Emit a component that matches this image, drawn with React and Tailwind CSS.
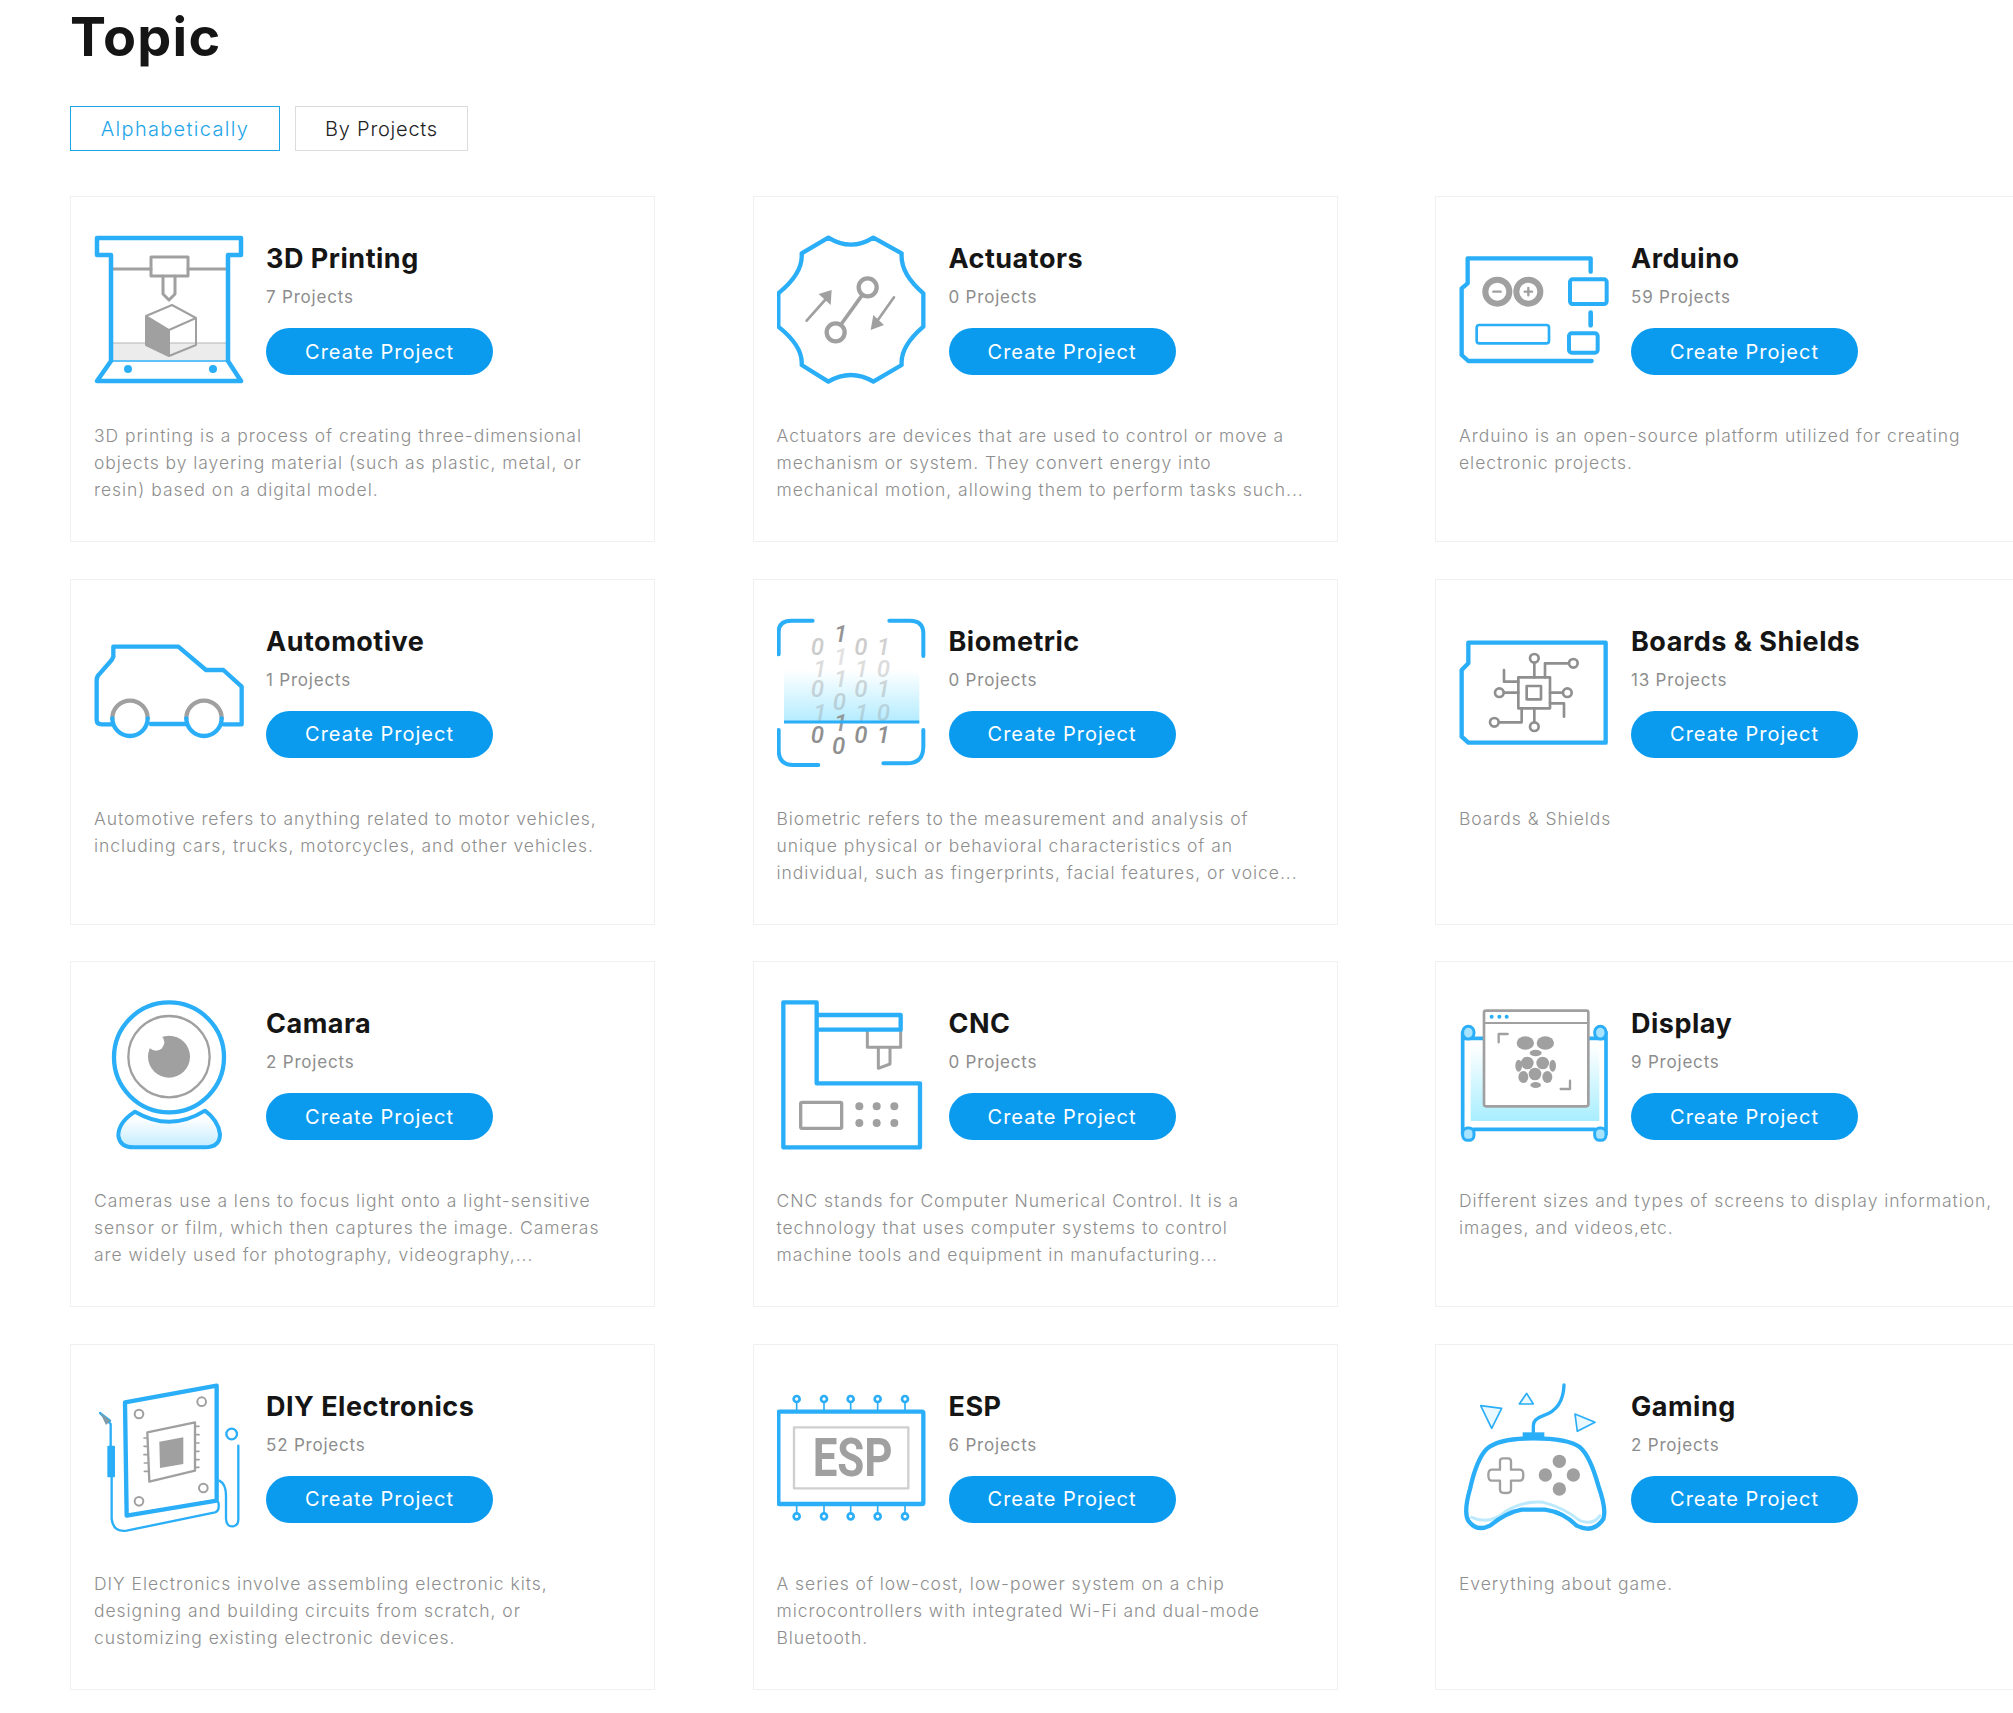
const BLUE = "#2aaef7";
const GRAY = "#a0a0a0";

const Svg = ({ vb, children }) => (
  <svg viewBox={vb} className="h-[150px] w-[150px] shrink-0" fill="none" strokeLinecap="round" strokeLinejoin="round">
    {children}
  </svg>
);

const PrintingIcon = () => (
  <Svg vb="0 0 150 150">
    <rect x="18" y="108" width="116" height="17" fill="#ececec" />
    <path d="M18 108H134" stroke="#b5b5b5" strokeWidth="1" />
    <path d="M18 34H57M94 34H134" stroke={GRAY} strokeWidth="3" />
    <rect x="57" y="22" width="37" height="19" stroke={GRAY} strokeWidth="3" />
    <path d="M69 41V59L75 65L81 59V41" stroke={GRAY} strokeWidth="3" />
    <path d="M52 81L75 95V121L52 110Z" fill={GRAY} />
    <path d="M78 70L102 83V110L75 121L52 110V81ZM52 81L75 95L102 83M75 95V121" stroke={GRAY} strokeWidth="2" fill="none" />
    <path d="M18 126H134" stroke={BLUE} strokeWidth="1.5" />
    <path d="M3 3H147V20H134V126L147 146H3L17 126V20H3Z" stroke={BLUE} strokeWidth="4.5" />
    <circle cx="34" cy="134" r="4" fill={BLUE} />
    <circle cx="119" cy="134" r="4" fill={BLUE} />
  </Svg>
);

const ActuatorsIcon = () => (
  <Svg vb="111 135 450 450">
    <path d="M265 143Q333 185 400 143L485 190Q480 250 550 310L550 410Q480 470 485 525L400 575Q333 535 265 575L185 525Q190 470 115 410L115 310Q190 250 185 190Z" stroke={BLUE} strokeWidth="13" />
    <circle cx="383" cy="292" r="27" stroke={GRAY} strokeWidth="13" />
    <circle cx="287" cy="427" r="27" stroke={GRAY} strokeWidth="13" />
    <path d="M366 316L304 402" stroke={GRAY} strokeWidth="11" />
    <path d="M200 392L255 330M462 322L410 395" stroke={GRAY} strokeWidth="8" />
    <path d="M275 300L236 312L272 345ZM392 420L432 405L400 375Z" fill={GRAY} />
  </Svg>
);

const ArduinoIcon = () => (
  <Svg vb="117 135 450 450">
    <path d="M512 245V205H143V280L125 295V495L145 513H515" stroke={BLUE} strokeWidth="13" />
    <rect x="450" y="268" width="110" height="74" rx="8" stroke={BLUE} strokeWidth="12" />
    <rect x="170" y="405" width="217" height="55" rx="8" stroke={BLUE} strokeWidth="8" />
    <rect x="447" y="430" width="86" height="58" rx="8" stroke={BLUE} strokeWidth="12" />
    <path d="M512 368V406" stroke={BLUE} strokeWidth="14" />
    <circle cx="232" cy="305" r="36" stroke={GRAY} strokeWidth="18" />
    <circle cx="325" cy="305" r="36" stroke={GRAY} strokeWidth="18" />
    <path d="M220 305H242M314 305H336M325 294V316" stroke={GRAY} strokeWidth="7" />
  </Svg>
);

const AutomotiveIcon = () => (
  <Svg vb="42 54 450 450">
    <path d="M95 373H65Q50 373 50 360V240Q50 228 60 220L95 180L100 170V140H295L378 210H430L485 260V373H430M212 372H320" stroke={BLUE} strokeWidth="13" />
    <path d="M97 355A53 53 0 0 1 203 355" stroke={GRAY} strokeWidth="13" />
    <path d="M319 355A53 53 0 0 1 425 355" stroke={GRAY} strokeWidth="13" />
    <path d="M97 355A53 53 0 0 0 203 355" stroke={BLUE} strokeWidth="13" />
    <path d="M319 355A53 53 0 0 0 425 355" stroke={BLUE} strokeWidth="13" />
  </Svg>
);

const bioDigits = [
  [152, 165, "0", 0.45], [222, 125, "1", 0.95], [283, 165, "0", 0.45], [350, 165, "1", 0.4],
  [222, 195, "1", 0.25], [160, 232, "1", 0.3], [285, 232, "1", 0.3], [350, 232, "0", 0.3],
  [152, 292, "0", 0.35], [222, 262, "1", 0.3], [283, 292, "0", 0.35], [350, 292, "1", 0.35],
  [218, 330, "0", 0.35], [160, 362, "1", 0.3], [285, 362, "1", 0.3], [350, 362, "0", 0.3],
  [152, 430, "0", 1], [222, 392, "1", 0.9], [283, 430, "0", 1], [350, 430, "1", 1], [216, 462, "0", 1],
];

const BiometricIcon = () => (
  <Svg vb="51 54 450 450">
    <defs>
      <linearGradient id="bio" x1="0" y1="0" x2="0" y2="1">
        <stop offset="0" stopColor="#ffffff" />
        <stop offset="1" stopColor="#b4ecff" />
      </linearGradient>
    </defs>
    <rect x="72" y="210" width="406" height="155" fill="url(#bio)" />
    {bioDigits.map(([x, y, d, o], i) => (
      <text key={i} x={x} y={y} fill="#8f8f8f" opacity={o} fontSize="72" fontWeight="500" fontStyle="italic" fontFamily="Roboto, sans-serif">
        {d}
      </text>
    ))}
    <path d="M72 366H478" stroke={BLUE} strokeWidth="9" strokeLinecap="butt" />
    <path d="M56 163V95Q56 62 95 62H158M388 62H450Q490 62 490 100V168M56 390V450Q56 495 100 495H175M370 490H440Q490 490 490 440V390" stroke={BLUE} strokeWidth="12" />
  </Svg>
);

const BoardsIcon = () => (
  <Svg vb="57 -6 450 450">
    <path d="M85 68H497V368H85L65 350V150L85 130Z" stroke={BLUE} strokeWidth="13" />
    <g stroke="#8f8f8f" strokeWidth="8">
      <rect x="235" y="172" width="95" height="93" />
      <rect x="260" y="198" width="43" height="40" />
      <path d="M283 129V172M315 172V130H386M192 150V185H235M192 218H235M330 218H368M330 250H372V290M245 265V307H177M283 265V306" />
      <circle cx="283" cy="115" r="13" />
      <circle cx="400" cy="130" r="13" />
      <circle cx="178" cy="218" r="13" />
      <circle cx="382" cy="218" r="13" />
      <circle cx="163" cy="307" r="13" />
      <circle cx="283" cy="320" r="13" />
    </g>
  </Svg>
);

const CameraIcon = () => (
  <Svg vb="12 33 450 450">
    <defs>
      <linearGradient id="cam" x1="0" y1="0" x2="0" y2="1">
        <stop offset="0.2" stopColor="#ffffff" />
        <stop offset="1" stopColor="#c2ecff" />
      </linearGradient>
    </defs>
    <path d="M135 368Q85 400 85 440Q90 475 130 475H345Q390 475 390 435Q385 395 345 365Q240 430 135 368Z" fill="url(#cam)" stroke={BLUE} strokeWidth="12" />
    <circle cx="237" cy="205" r="165" fill="#fff" stroke={BLUE} strokeWidth="13" />
    <circle cx="237" cy="203" r="122" stroke={GRAY} strokeWidth="7" />
    <circle cx="237" cy="203" r="63" fill={GRAY} />
    <circle cx="198" cy="160" r="25" fill="#fff" />
  </Svg>
);

const CncIcon = () => (
  <Svg vb="51 33 450 450">
    <path d="M322 125V175H422V125M355 178V238L390 225V178" stroke={GRAY} strokeWidth="9" />
    <path d="M70 40H170V283H480V475H70ZM170 78H422V122H170" stroke={BLUE} strokeWidth="13" />
    <rect x="122" y="340" width="123" height="78" rx="4" stroke={GRAY} strokeWidth="10" />
    {[298, 350, 403].map((x) => (
      <g key={x} fill={GRAY}>
        <circle cx={x} cy="352" r="12" />
        <circle cx={x} cy="402" r="12" />
      </g>
    ))}
  </Svg>
);

const DisplayIcon = () => (
  <Svg vb="57 33 450 450">
    <defs>
      <linearGradient id="disp" x1="0" y1="0" x2="0" y2="1">
        <stop offset="0" stopColor="#ffffff" />
        <stop offset="1" stopColor="#a8eeff" />
      </linearGradient>
    </defs>
    <rect x="92" y="170" width="386" height="226" fill="url(#disp)" />
    <path d="M68 130V435M498 130V435M100 421H465M68 148H130M445 148H498" stroke={BLUE} strokeWidth="11" />
    <rect x="68" y="112" width="34" height="38" rx="17" fill="#a8e4ff" stroke={BLUE} strokeWidth="9" />
    <rect x="464" y="112" width="34" height="38" rx="17" fill="#a8e4ff" stroke={BLUE} strokeWidth="9" />
    <rect x="68" y="417" width="34" height="37" rx="15" fill="#a8e4ff" stroke={BLUE} strokeWidth="9" />
    <rect x="464" y="417" width="34" height="37" rx="15" fill="#a8e4ff" stroke={BLUE} strokeWidth="9" />
    <rect x="132" y="65" width="313" height="287" rx="6" fill="#fff" stroke={GRAY} strokeWidth="8" />
    <path d="M132 102H445" stroke={GRAY} strokeWidth="6" />
    <circle cx="155" cy="83" r="6" fill={BLUE} />
    <circle cx="178" cy="83" r="6" fill={BLUE} />
    <circle cx="200" cy="83" r="6" fill={BLUE} />
    <path d="M176 160V135H203M362 300H390V275" stroke={GRAY} strokeWidth="7" />
    <g fill={GRAY}>
      <ellipse cx="256" cy="162" rx="26" ry="20" />
      <ellipse cx="316" cy="162" rx="26" ry="20" />
      <ellipse cx="287" cy="192" rx="18" ry="10" />
      <circle cx="262" cy="222" r="19" />
      <circle cx="308" cy="222" r="19" />
      <ellipse cx="236" cy="230" rx="10" ry="18" />
      <ellipse cx="338" cy="230" rx="10" ry="18" />
      <circle cx="285" cy="255" r="19" />
      <ellipse cx="250" cy="264" rx="15" ry="18" />
      <ellipse cx="322" cy="264" rx="15" ry="18" />
      <ellipse cx="287" cy="288" rx="16" ry="9" />
    </g>
  </Svg>
);

const DiyIcon = () => (
  <Svg vb="12 42 450 450">
    <path d="M62 240V165L30 132L60 155M65 325V450Q70 490 110 485L375 430Q390 425 385 400M388 335Q408 345 408 380V450Q410 475 430 472Q445 470 445 450V230" stroke={BLUE} strokeWidth="7" />
    <path d="M30 130L62 155L48 168Z" fill="#7c9aa8" />
    <rect x="52" y="230" width="23" height="95" rx="3" fill={BLUE} />
    <circle cx="425" cy="195" r="16" stroke={BLUE} strokeWidth="7" />
    <path d="M105 100L380 50V395L110 440Z" stroke={BLUE} strokeWidth="13" />
    <path d="M172 190L315 160V305L178 338Z" stroke={GRAY} strokeWidth="7" />
    <path d="M208 218L280 205V285L210 297Z" fill={GRAY} />
    <path d="M162 207H172M162 232H172M162 257H172M163 282H174M163 307H176M315 172H327M315 197H327M315 222H327M315 247H327M315 272H327M315 295H327" stroke={GRAY} strokeWidth="5" />
    {[[147, 135], [335, 98], [340, 357], [147, 397]].map(([x, y]) => (
      <circle key={x + y} cx={x} cy={y} r="13" stroke={GRAY} strokeWidth="6" />
    ))}
  </Svg>
);

const EspIcon = () => (
  <Svg vb="51 12 450 450">
    {[110, 192, 272, 353, 435].map((x) => (
      <g key={x} stroke={BLUE}>
        <path d={`M${x} 70V98M${x} 375V402`} strokeWidth="5" />
        <circle cx={x} cy="60" r="9" strokeWidth="8" />
        <circle cx={x} cy="412" r="9" strokeWidth="8" />
      </g>
    ))}
    <rect x="55" y="98" width="435" height="277" rx="4" fill="#fff" stroke={BLUE} strokeWidth="13" />
    <rect x="102" y="145" width="343" height="183" stroke="#cfcfcf" strokeWidth="7" />
    <text x="158" y="290" fill={GRAY} fontSize="160" fontWeight="700" fontFamily="Roboto, sans-serif" textLength="240" lengthAdjust="spacingAndGlyphs">
      ESP
    </text>
  </Svg>
);

const GamingIcon = () => (
  <Svg vb="57 42 450 450">
    <path d="M280 190V170Q280 150 310 140Q370 120 372 48" stroke={BLUE} strokeWidth="10" />
    <rect x="248" y="190" width="65" height="22" fill={BLUE} />
    <path d="M122 110L185 118L155 178Z" fill="#eaf8ff" stroke={BLUE} strokeWidth="5" />
    <path d="M260 73L238 105H280Z" fill="#eaf8ff" stroke={BLUE} strokeWidth="5" />
    <path d="M405 135L465 160L412 187Z" fill="#eaf8ff" stroke={BLUE} strokeWidth="5" />
    <path d="M95 445Q150 470 200 425Q250 395 310 400Q370 415 420 455Q460 470 480 440" stroke="#bde9fd" strokeWidth="9" />
    <path d="M280 208Q175 208 140 240Q110 270 90 360Q70 430 85 455Q110 490 150 470Q200 430 245 422H315Q370 430 410 470Q460 495 490 450Q500 420 475 350Q450 260 420 235Q385 208 280 208Z" stroke={BLUE} strokeWidth="13" />
    <path d="M180 275Q180 268 190 268H205Q213 268 213 278V302H240Q250 302 250 318Q250 335 240 335H213V362Q213 372 197 372Q180 372 180 362V335H155Q145 335 145 318Q145 302 155 302H180Z" stroke={GRAY} strokeWidth="7" />
    <g fill={GRAY}>
      <circle cx="358" cy="277" r="20" />
      <circle cx="316" cy="318" r="20" />
      <circle cx="400" cy="318" r="20" />
      <circle cx="358" cy="360" r="20" />
    </g>
  </Svg>
);

const topics = [
  { name: "3D Printing", count: "7 Projects", Icon: PrintingIcon, lines: ["3D printing is a process of creating three-dimensional", "objects by layering material (such as plastic, metal, or", "resin) based on a digital model."] },
  { name: "Actuators", count: "0 Projects", Icon: ActuatorsIcon, lines: ["Actuators are devices that are used to control or move a", "mechanism or system. They convert energy into", "mechanical motion, allowing them to perform tasks such..."] },
  { name: "Arduino", count: "59 Projects", Icon: ArduinoIcon, lines: ["Arduino is an open-source platform utilized for creating", "electronic projects."] },
  { name: "Automotive", count: "1 Projects", Icon: AutomotiveIcon, lines: ["Automotive refers to anything related to motor vehicles,", "including cars, trucks, motorcycles, and other vehicles."] },
  { name: "Biometric", count: "0 Projects", Icon: BiometricIcon, lines: ["Biometric refers to the measurement and analysis of", "unique physical or behavioral characteristics of an", "individual, such as fingerprints, facial features, or voice..."] },
  { name: "Boards & Shields", count: "13 Projects", Icon: BoardsIcon, lines: ["Boards & Shields"] },
  { name: "Camara", count: "2 Projects", Icon: CameraIcon, lines: ["Cameras use a lens to focus light onto a light-sensitive", "sensor or film, which then captures the image. Cameras", "are widely used for photography, videography,..."] },
  { name: "CNC", count: "0 Projects", Icon: CncIcon, lines: ["CNC stands for Computer Numerical Control. It is a", "technology that uses computer systems to control", "machine tools and equipment in manufacturing..."] },
  { name: "Display", count: "9 Projects", Icon: DisplayIcon, lines: ["Different sizes and types of screens to display information,", "images, and videos,etc."] },
  { name: "DIY Electronics", count: "52 Projects", Icon: DiyIcon, lines: ["DIY Electronics involve assembling electronic kits,", "designing and building circuits from scratch, or", "customizing existing electronic devices."] },
  { name: "ESP", count: "6 Projects", Icon: EspIcon, lines: ["A series of low-cost, low-power system on a chip", "microcontrollers with integrated Wi-Fi and dual-mode", "Bluetooth."] },
  { name: "Gaming", count: "2 Projects", Icon: GamingIcon, lines: ["Everything about game."] },
];

const TopicCard = ({ topic }) => {
  const { Icon } = topic;
  return (
    <div className="box-border h-[346px] border border-[#f0f0f0] bg-white px-[23px] pt-[38px]">
      <div className="flex gap-[22px]">
        <Icon />
        <div className="flex flex-col items-start pt-[6px]">
          <div className="text-[27px] leading-[36px] font-bold tracking-[0.5px] whitespace-nowrap text-[#151515]">{topic.name}</div>
          <div className="mt-[8px] text-[17px] leading-[24px] tracking-[0.8px] text-[#8d8d8d]">{topic.count}</div>
          <button type="button" className="mt-[19px] h-[47px] w-[227px] rounded-full bg-[#0a9bef] text-center text-[20px] tracking-[1px] text-white">
            Create Project
          </button>
        </div>
      </div>
      <div className="mt-[37px] text-[17.5px] leading-[27px] font-light tracking-[0.95px] whitespace-nowrap text-[#8e8e8e]">
        {topic.lines.map((line) => (
          <div key={line}>{line}</div>
        ))}
      </div>
    </div>
  );
};

export default function App() {
  return (
    <div className="h-[1713px] w-full overflow-hidden bg-white pl-[70px] font-['Inter',sans-serif]">
      <h1 className="h-[74px] text-[54px] leading-[74px] font-bold tracking-[1.2px] text-[#151515]">Topic</h1>
      <div className="mt-[32px] flex gap-[15px]">
        <button type="button" className="h-[45px] w-[210px] border border-[#1ea5e8] text-[20px] font-light tracking-[1.3px] text-[#1ea5e8]">
          Alphabetically
        </button>
        <button type="button" className="h-[45px] w-[173px] border border-[#dcdcdc] text-[20px] font-light tracking-[0.75px] text-[#222]">
          By Projects
        </button>
      </div>
      <div className="mt-[45px] grid grid-cols-[repeat(3,585px)] gap-x-[97.5px] gap-y-[36.6px]">
        {topics.map((topic) => (
          <TopicCard key={topic.name} topic={topic} />
        ))}
      </div>
    </div>
  );
}
